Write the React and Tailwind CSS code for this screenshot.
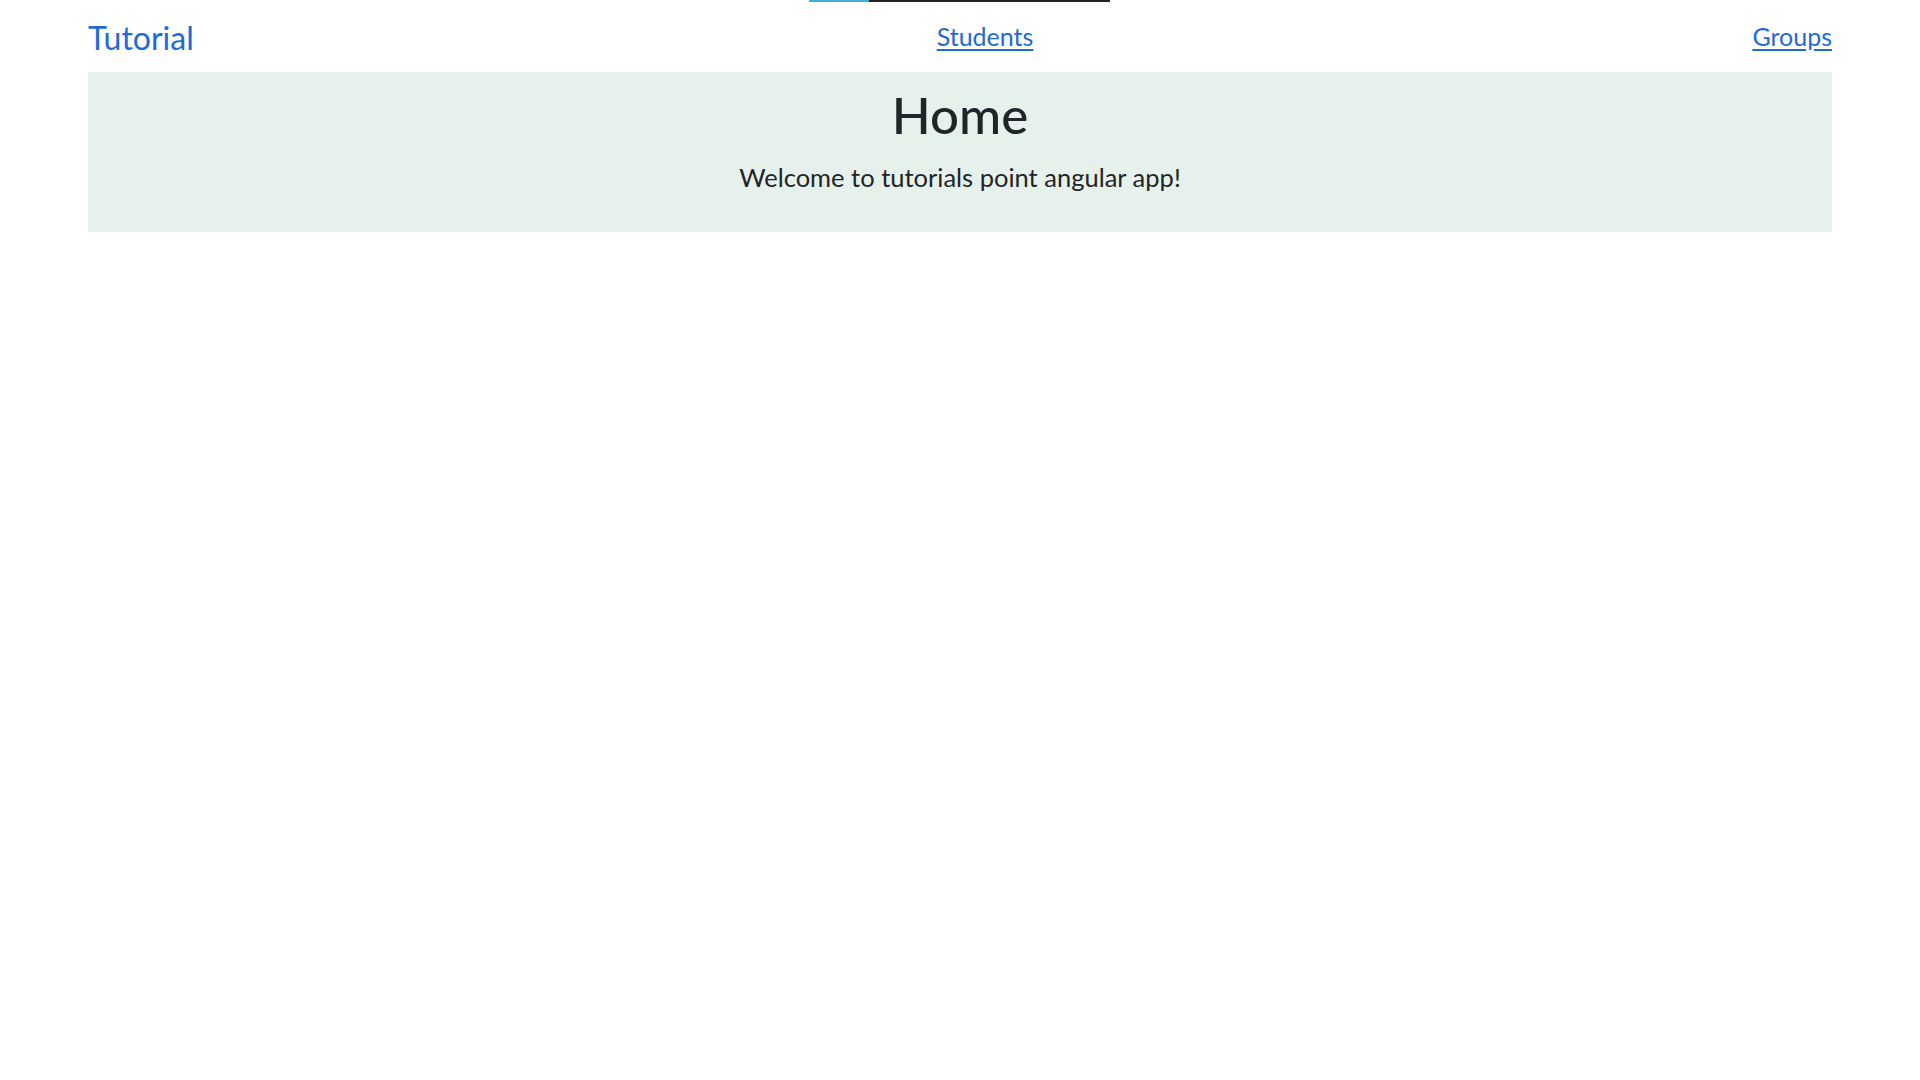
export default function App() {
    return (
        <div className="relative min-h-screen bg-white font-['Lato','Liberation_Sans',sans-serif] text-[#212529]">
            {/* thin loading bar at the very top */}
            <div className="absolute top-0 left-[809px] flex h-[2px] w-[301px]">
                <div className="h-full w-[60px] bg-[#3fb0cc]" />
                <div className="h-full flex-1 bg-[#222222]" />
            </div>

            <nav className="mx-[88px] flex h-[72px] items-center justify-between pt-[3px]">
                <a href="#" className="mr-6 text-[32px] leading-[40px] text-[#1f6ad8] no-underline">
                    Tutorial
                </a>
                <a href="#" className="pb-[4px] text-[25px] leading-[36px] text-[#1f6ad8] underline underline-offset-[3px]">
                    Students
                </a>
                <a href="#" className="pb-[4px] text-[25px] leading-[36px] text-[#1f6ad8] underline underline-offset-[3px]">
                    Groups
                </a>
            </nav>

            <div className="mx-[88px] flex flex-col items-center bg-[#e7f1ec] pt-[13px] pb-[37px]">
                <h1 className="text-[51px] font-medium leading-[60px]">Home</h1>
                <p className="mt-[14px] text-[25.5px] leading-[36px]">
                    Welcome to tutorials point angular app!
                </p>
            </div>
        </div>
    );
}
